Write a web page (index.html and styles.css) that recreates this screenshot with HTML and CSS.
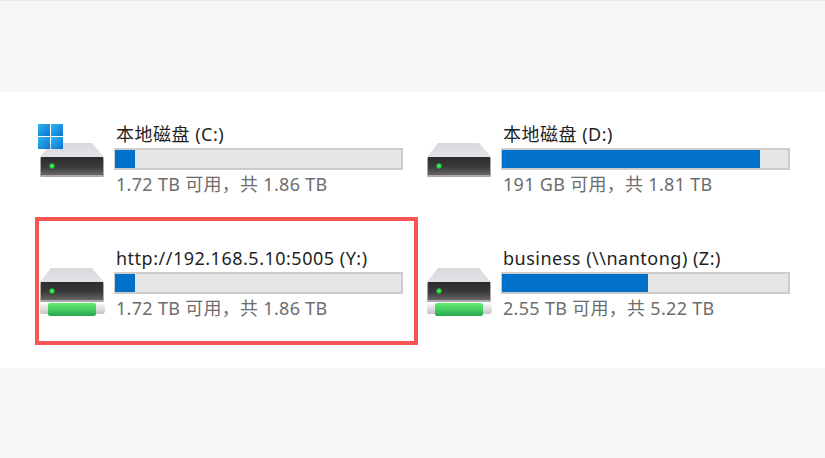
FILE: index.html
```html
<!DOCTYPE html>
<html lang="zh-CN">
<head>
    <meta charset="UTF-8">
    <meta name="viewport" content="width=device-width, initial-scale=1.0">
    <title>此电脑</title>
    <link rel="stylesheet" href="styles.css">
</head>
<body>
    <svg class="defs" width="0" height="0">
        <defs>
            <linearGradient id="bodyGrad" x1="0" y1="0" x2="0" y2="1">
                <stop offset="0" stop-color="#2c2c2c"/>
                <stop offset="0.55" stop-color="#3a3a3a"/>
                <stop offset="1" stop-color="#666666"/>
            </linearGradient>
            <linearGradient id="topGrad" x1="0" y1="0" x2="0" y2="1">
                <stop offset="0" stop-color="#d9dade"/>
                <stop offset="1" stop-color="#e2e3e6"/>
            </linearGradient>
            <linearGradient id="greenGrad" x1="0" y1="0" x2="0" y2="1">
                <stop offset="0" stop-color="#63ee70"/>
                <stop offset="1" stop-color="#28a850"/>
            </linearGradient>
            <linearGradient id="capGrad" x1="0" y1="0" x2="0" y2="1">
                <stop offset="0" stop-color="#f4f5f4"/>
                <stop offset="1" stop-color="#c4c6c6"/>
            </linearGradient>
            <radialGradient id="ledGrad">
                <stop offset="0" stop-color="#5dff5d"/>
                <stop offset="0.6" stop-color="#22d63a"/>
                <stop offset="1" stop-color="#2f6f38"/>
            </radialGradient>
            <linearGradient id="winGrad" x1="0" y1="0" x2="1" y2="1">
                <stop offset="0" stop-color="#2fb6f0"/>
                <stop offset="1" stop-color="#0b74d1"/>
            </linearGradient>
            <g id="disk">
                <path d="M13 21H54L66 35H2Z" fill="url(#topGrad)"/>
                <rect x="2" y="35" width="64" height="20" rx="1.5" fill="#a9a9a9"/>
                <rect x="3" y="35" width="62" height="18" fill="url(#bodyGrad)"/>
                <circle cx="14" cy="44" r="3" fill="url(#ledGrad)"/>
            </g>
            <g id="netdisk">
                <use href="#disk" y="1"/>
                <path d="M3 58H65Q67 58 67 63T65 68H3Q2 68 2 63T3 58Z" fill="url(#capGrad)"/>
                <rect x="10" y="57" width="48" height="13" rx="2" fill="url(#greenGrad)"/>
            </g>
        </defs>
    </svg>

    <div class="top-band"></div>

    <div class="drives">
        <div class="drive">
            <svg class="icon" viewBox="0 0 68 72">
                <use href="#disk"/>
                <g fill="url(#winGrad)">
                    <rect x="0" y="2" width="12" height="12"/>
                    <rect x="13" y="2" width="12" height="12"/>
                    <rect x="0" y="15" width="12" height="12"/>
                    <rect x="13" y="15" width="12" height="12"/>
                </g>
            </svg>
            <div class="info">
                <div class="name">本地磁盘 (C:)</div>
                <div class="bar"><div class="used" style="width: 7%"></div></div>
                <div class="free">1.72 TB 可用，共 1.86 TB</div>
            </div>
        </div>

        <div class="drive">
            <svg class="icon" viewBox="0 0 68 72"><use href="#disk"/></svg>
            <div class="info">
                <div class="name">本地磁盘 (D:)</div>
                <div class="bar"><div class="used" style="width: 90.5%"></div></div>
                <div class="free">191 GB 可用，共 1.81 TB</div>
            </div>
        </div>

        <div class="drive">
            <svg class="icon" viewBox="0 0 68 72"><use href="#netdisk"/></svg>
            <div class="info">
                <div class="name">http://192.168.5.10:5005 (Y:)</div>
                <div class="bar"><div class="used" style="width: 7%"></div></div>
                <div class="free">1.72 TB 可用，共 1.86 TB</div>
            </div>
            <div class="highlight"></div>
        </div>

        <div class="drive">
            <svg class="icon" viewBox="0 0 68 72"><use href="#netdisk"/></svg>
            <div class="info">
                <div class="name">business (\\nantong) (Z:)</div>
                <div class="bar"><div class="used" style="width: 51.3%"></div></div>
                <div class="free">2.55 TB 可用，共 5.22 TB</div>
            </div>
        </div>
    </div>

    <div class="bottom-band"></div>
</body>
</html>
```

FILE: styles.css
```css
body {
    margin: 0;
    height: 458px;
    overflow: hidden;
    background-color: #f6f6f6;
    font-family: "Noto Sans", "Noto Sans CJK SC", sans-serif;
}
.defs {
    display: block;
    height: 0;
}
.top-band {
    height: 91px;
    border-top: 1px solid #e8e8e8;
}
.drives {
    display: grid;
    grid-template-columns: 387px 387px;
    grid-auto-rows: 124px;
    height: 276px;
    box-sizing: border-box;
    padding: 30px 0 0 38px;
    background-color: #fff;
}
.drive {
    position: relative;
    display: flex;
    gap: 8px;
}
.icon {
    width: 68px;
    height: 72px;
    flex: none;
}
.info {
    width: 289px;
    padding-top: 1px;
}
.name {
    height: 25px;
    padding-left: 2px;
    font-size: 18px;
    letter-spacing: 0.5px;
    line-height: 22px;
    color: #1f1f1f;
    white-space: nowrap;
}
.bar {
    height: 22px;
    box-sizing: border-box;
    border: 2px solid #cccccc;
    background-color: #e6e6e6;
}
.used {
    height: 100%;
    margin: 0 0 0 -1px;
    background-color: #0070c8;
}
.free {
    margin-top: 3px;
    padding-left: 2px;
    font-size: 18px;
    letter-spacing: 0.3px;
    line-height: 22px;
    color: #6d6d6d;
    white-space: nowrap;
}
.highlight {
    position: absolute;
    left: -3px;
    top: -29px;
    width: 383px;
    height: 128px;
    box-sizing: border-box;
    border: 4px solid #f95555;
}
```
